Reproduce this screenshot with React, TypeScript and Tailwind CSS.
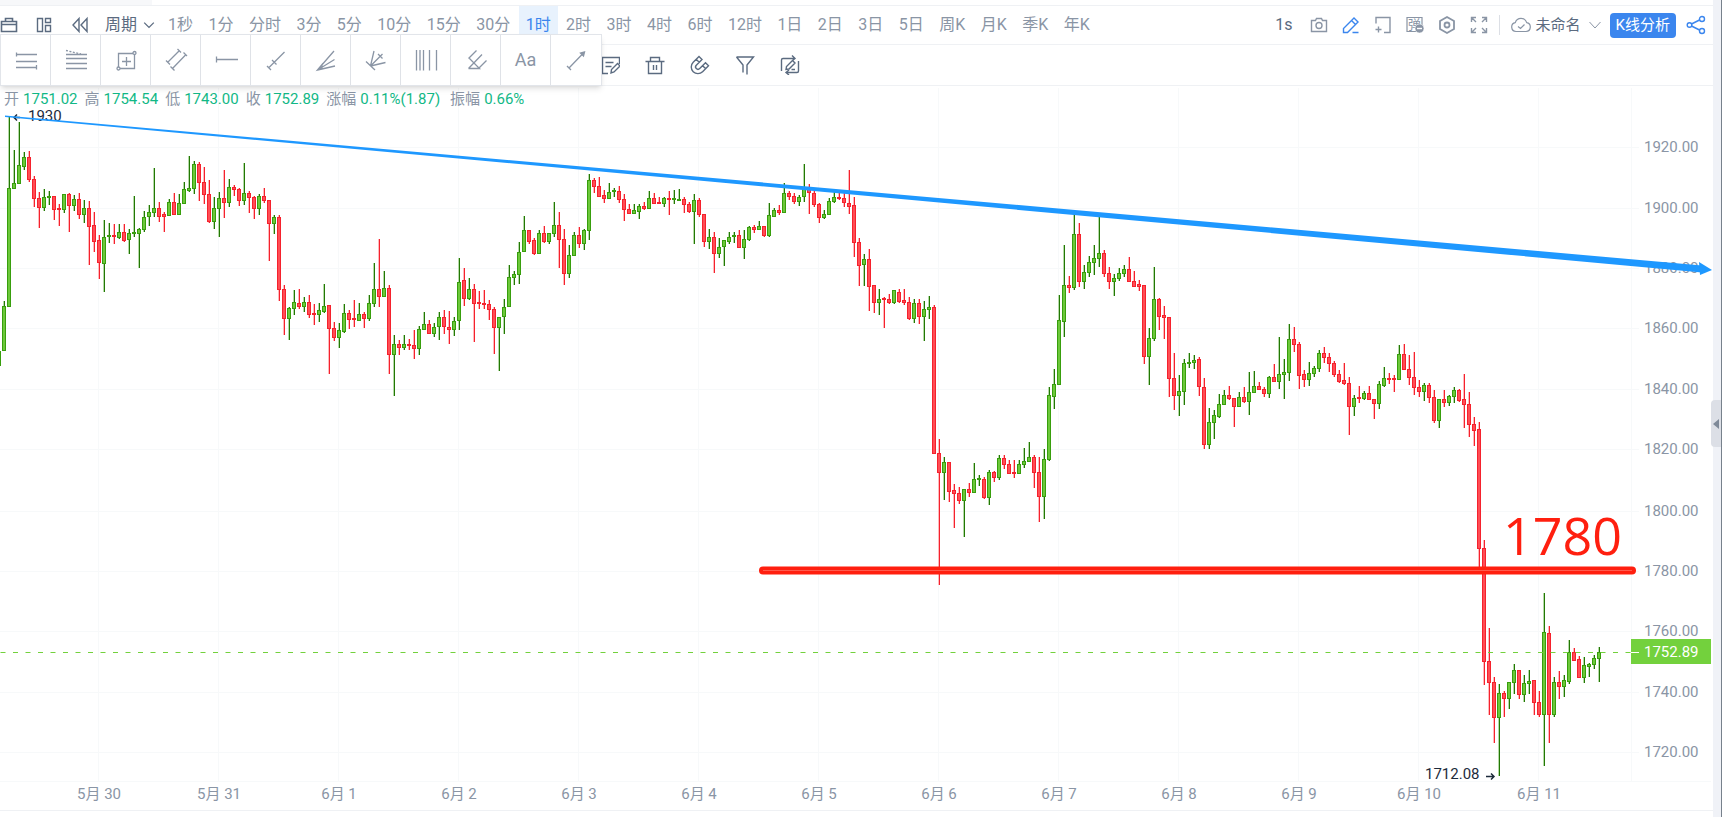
import React from 'react';

type Side = 'u' | 'd';

interface IconProps {
  children: React.ReactNode;
  size?: string;
}

const PERIODS = [
  '1秒', '1分', '分时', '3分', '5分', '10分', '15分', '30分', '1时', '2时', '3时', '4时',
  '6时', '12时', '1日', '2日', '3日', '5日', '周K', '月K', '季K', '年K',
];

const QUOTES = [
  { label: '开', value: '1751.02' },
  { label: '高', value: '1754.54' },
  { label: '低', value: '1743.00' },
  { label: '收', value: '1752.89' },
  { label: '涨幅', value: '0.11%(1.87)' },
  { label: '振幅', value: '0.66%' },
];

const PRICE_TICKS = [
  { price: '1920.00', y: 147 },
  { price: '1900.00', y: 208 },
  { price: '1880.00', y: 268 },
  { price: '1860.00', y: 328 },
  { price: '1840.00', y: 389 },
  { price: '1820.00', y: 449 },
  { price: '1800.00', y: 511 },
  { price: '1780.00', y: 571 },
  { price: '1760.00', y: 631 },
  { price: '1740.00', y: 692 },
  { price: '1720.00', y: 752 },
];

const DAYS = [
  '5月 30', '5月 31', '6月 1', '6月 2', '6月 3', '6月 4', '6月 5',
  '6月 6', '6月 7', '6月 8', '6月 9', '6月 10', '6月 11',
];

// one hourly bar per entry: side, high, body top, body bottom, low
const BARS = `
u 351 351 366 366|u 301 306 351 351|u 117 188 307 307|u 150 183 189 189|u 122 165 184 184|u 152 157 167 170
d 151 157 180 182|d 176 179 199 207|d 192 198 208 228|u 189 197 208 211|u 191 196 198 205|d 196 196 210 220
d 204 208 210 226|u 194 194 210 213|d 193 194 206 232|u 195 199 206 211|d 193 199 215 219|u 200 208 215 223
d 201 208 227 265|d 212 225 242 252|d 235 240 263 279|u 220 237 264 292|u 223 235 237 243|d 224 235 237 244
u 224 232 238 239|d 224 232 241 242|u 229 233 240 254|u 196 232 234 237|u 228 229 234 268|u 211 217 230 232
u 205 212 217 226|u 168 208 213 217|d 202 208 217 222|d 212 214 217 232|u 199 202 216 216|d 193 202 215 215
u 194 203 215 215|u 182 189 204 204|u 156 188 191 192|u 161 164 189 194|d 162 164 183 201|d 167 182 195 204
d 180 194 222 223|u 197 208 222 229|u 192 198 209 237|d 170 198 203 218|u 179 187 203 207|d 185 187 190 196
d 188 189 201 206|u 163 193 201 205|d 191 193 198 213|d 196 197 209 219|u 194 196 209 215|d 188 196 201 203
d 200 200 224 261|u 215 217 224 234|d 215 217 290 301|d 285 289 319 335|u 307 308 319 340|u 290 302 309 315
d 289 303 307 309|u 297 302 307 312|d 295 302 315 318|d 304 313 315 325|u 303 310 315 322|u 284 306 312 313
d 305 305 329 374|d 322 328 338 341|u 323 330 338 348|u 304 313 332 333|d 310 313 320 329|d 300 318 320 327
u 303 314 321 321|d 312 314 319 328|u 295 303 319 321|u 263 289 304 307|d 239 289 297 307|u 271 288 297 297
d 285 288 355 374|u 335 344 355 396|d 340 344 348 355|u 335 344 348 350|d 339 344 346 350|d 330 345 349 359
u 326 329 349 355|u 312 324 330 330|d 320 324 334 334|u 323 327 334 337|u 312 317 327 340|d 310 317 327 334
d 311 327 330 344|u 317 321 330 336|u 258 282 321 330|d 268 280 299 306|u 278 289 299 300|d 284 289 304 342
d 291 302 304 309|d 290 303 305 309|d 300 304 310 320|d 307 309 328 354|u 317 317 328 371|u 299 307 317 334
u 265 277 307 307|u 271 274 278 285|u 242 252 275 284|u 216 230 252 252|d 230 230 242 244|d 238 240 254 255
u 230 233 254 254|d 226 233 242 243|u 233 233 242 244|u 202 225 234 237|d 212 225 240 268|d 229 239 274 285
u 245 255 274 278|u 232 235 256 256|d 227 235 244 248|u 229 230 244 250|u 174 180 231 240|d 178 180 187 193
d 177 186 197 197|d 190 195 199 203|u 183 192 199 199|u 188 190 192 197|d 186 191 200 203|d 194 199 210 221
d 204 209 214 214|u 204 210 214 214|u 204 206 212 219|d 202 206 209 210|u 191 198 209 209|d 193 198 204 204
d 197 202 204 204|u 197 198 204 207|d 191 198 200 215|u 190 198 200 204|u 189 199 200 200|d 197 199 205 213
d 202 204 212 213|u 194 200 212 244|d 198 200 215 217|d 214 214 242 247|u 229 237 242 249|d 232 237 254 273
u 238 247 254 258|u 240 240 247 266|u 232 237 242 244|u 232 235 237 243|d 230 235 248 248|u 230 239 248 259
u 226 227 240 241|d 225 227 230 233|u 221 226 230 230|d 226 226 236 237|u 203 215 236 237|u 208 210 217 217
d 205 210 213 215|u 183 193 213 213|d 191 193 197 200|d 193 196 202 204|u 195 197 202 206|u 164 189 197 202
d 184 189 193 214|d 190 193 205 207|d 203 204 218 223|u 210 214 218 219|u 198 201 215 215|u 192 197 202 203
d 192 197 199 200|d 190 198 203 207|d 170 203 207 214|d 197 205 243 257|d 238 242 266 286|u 254 259 265 286
d 249 259 287 311|d 285 285 303 313|u 289 299 303 315|d 297 298 300 328|d 294 299 303 304|u 290 290 303 304
d 289 292 302 303|d 289 300 303 305|d 297 302 319 320|u 299 303 319 323|d 299 303 317 324|u 301 309 317 341
u 296 307 310 319|d 305 307 454 454|d 439 453 473 585|u 457 462 473 500|d 462 462 492 502|d 484 490 494 528
d 487 493 501 504|u 489 489 501 537|d 483 489 493 497|u 463 479 493 493|u 475 478 480 486|d 477 479 498 499
u 470 472 498 505|d 471 472 478 482|u 455 458 478 480|d 455 458 465 469|d 460 464 474 474|d 460 472 474 478
u 460 464 474 474|u 448 461 465 468|u 442 457 462 462|d 455 457 473 488|d 457 472 497 522|u 449 459 497 519
u 387 395 460 461|u 369 384 397 409|u 295 320 385 385|u 245 285 322 337|d 276 285 288 293|u 213 234 288 290
d 223 234 282 287|u 265 272 282 289|u 256 262 273 277|u 245 258 263 275|u 216 253 259 267|d 250 253 274 277
d 267 273 282 289|u 274 278 282 296|u 268 273 279 281|u 265 269 274 277|d 257 269 282 282|d 271 281 287 287
d 280 284 287 291|d 285 285 357 364|u 328 338 357 385|u 267 299 339 341|d 298 299 317 330|d 306 315 318 339
d 317 317 379 397|d 353 378 396 410|u 375 391 396 416|u 359 363 392 405|u 353 362 364 368|u 355 360 363 369
d 357 359 387 396|d 378 387 445 449|u 408 422 445 449|u 410 415 423 439|u 394 404 417 418|u 390 395 405 405
d 386 395 399 400|d 398 398 407 427|u 392 397 407 407|d 387 397 402 403|u 372 392 402 415|u 371 386 393 393
d 382 386 390 390|d 387 389 394 397|u 376 377 394 398|d 364 377 382 382|u 337 374 382 389|u 359 372 375 399
u 324 339 373 381|d 327 339 345 352|d 342 344 376 389|d 370 374 380 387|u 362 373 380 386|u 366 368 374 377
u 350 353 369 372|d 347 353 358 363|d 353 357 364 372|d 361 363 375 377|d 370 374 382 383|d 363 380 384 385
d 377 383 407 435|u 395 398 407 416|d 386 397 399 403|u 391 393 399 400|d 386 393 400 400|d 399 399 404 419
u 381 384 404 409|u 367 378 386 387|d 373 378 380 384|d 375 378 380 392|u 345 354 380 380|d 344 354 370 370
d 355 369 378 385|d 352 377 388 395|d 380 387 392 397|u 383 385 392 401|d 383 385 398 403|d 390 397 421 423
u 399 399 421 428|d 390 399 403 407|u 395 396 403 406|u 387 390 397 403|d 389 390 401 402|d 374 399 405 428
d 392 404 425 437|d 417 424 431 446|d 422 429 549 570|d 540 548 662 685|d 628 661 683 715|d 677 682 718 743
u 684 693 718 776|d 691 693 699 717|u 682 682 699 709|u 664 670 683 694|d 670 670 695 699|u 675 683 695 702
u 670 681 684 694|d 680 680 703 715|d 691 702 715 717|u 593 632 715 766|d 626 633 715 743|u 677 682 715 717
d 671 682 687 699|u 675 680 687 697|u 640 652 682 684|d 648 652 661 661|d 656 659 678 678|u 657 665 678 683
u 663 664 667 677|u 655 658 665 669|u 647 652 659 682
`
  .trim()
  .split(/[|\n]/)
  .map((row) => {
    const [side, ...rest] = row.split(' ');
    const [high, top, bottom, low] = rest.map(Number);
    return { side: side as Side, high, top, bottom, low };
  });

const BAR_COLORS = {
  u: { wick: '#237804', soft: '#b4d9a6', edge: '#389e0d', fill: '#6cc83a' },
  d: { wick: '#f5222d', soft: '#ffb8bb', edge: '#f5222d', fill: '#ff4d55' },
};

const Icon: React.FC<IconProps> = ({ children, size = 'size-5' }) => (
  <svg viewBox="0 0 20 20" className={`${size} shrink-0`} fill="none" stroke="currentColor" strokeWidth="1.4" aria-hidden="true">
    {children}
  </svg>
);

const DRAW_TOOLS: { name: string; art: React.ReactNode }[] = [
  { name: '平行线段', art: <path d="M2 6.5h21M2.5 4.5v4M2 13.5h21M2 19.5h21M22.5 17v4.5" /> },
  {
    name: '斐波那契',
    art: (
      <>
        <path d="M2 2.5 17 6" strokeDasharray="2 1.5" />
        <path d="M2 6.5h21M2 10.5h21M2 15.5h21M2 20.5h21" />
      </>
    ),
  },
  {
    name: '矩形',
    art: (
      <>
        <path d="M19 5.5H4.5V19M6 20.5h14.5V7M8 13.5h9M12.5 9v9" />
        <circle cx="20.5" cy="5" r="1.5" />
        <circle cx="4.5" cy="20.5" r="1.5" />
      </>
    ),
  },
  { name: '平行通道', art: <path d="m3.5 14.5 12-12M2 12.5l4 4M13.5 1l3.5 3.5M8 21 22 6.5M6.5 18.5l4 4M19.5 4.5 23 8" /> },
  { name: '水平射线', art: <path d="M2 11.5h22M2.5 8.5v6" /> },
  { name: '射线', art: <path d="m4.5 20 16-16M3 18l4 4M8 12l4.5 4.5" /> },
  { name: '扇形线', art: <path d="M3.5 22 20 3M3.5 22l17-10.500M3.5 22 21 18M3.5 22 8 16.5v4z" /> },
  { name: '角度线', art: <path d="M6.5 18 10 3M6.5 18l12-12M6.5 18l15-3.5M2 13.5l9 8.5M14 6l4.5 4.5" /> },
  { name: '竖线', art: <path d="M2.5 2v20.5M6 2v20.5M9.5 2v20.5M15.5 2v20.5M22.5 2v20.5" /> },
  { name: '音叉线', art: <path d="m4.5 10.500 8-8M4.5 20.5 18 6.5M14.5 20.5l8-8M5.5 10.5l10 10h-11" /> },
  { name: '文字', art: null },
  {
    name: '箭头',
    art: (
      <>
        <path d="M5 20 19 5.5M3 18l4 4" />
        <path d="m20.5 4-1 4-3-3z" fill="currentColor" />
      </>
    ),
  },
];

const Toolbar: React.FC = () => (
  <header className="flex h-[39px] items-stretch border-b border-[#eff1f4] text-base text-[#8a95a5]">
    <div className="flex items-center text-[#5b6b80]">
      <button aria-label="日历" className="-ml-px">
        <Icon>
          <path d="M2.5 6.5h15v10h-15zM2.5 9.5h15M6.5 6.5v-3h7v3" strokeWidth="1.6" />
        </Icon>
      </button>
      <button aria-label="布局" className="ml-[15px]">
        <Icon>
          <path d="M3.5 3.5h5v13h-5zM11.5 3.5h5v4h-5zM11.5 10.5h5v6h-5z" />
        </Icon>
      </button>
      <button aria-label="回放" className="ml-4">
        <Icon>
          <path d="M9 3.5v13L3 10zM17 3.5v13L11 10z" />
        </Icon>
      </button>
      <button className="ml-[15px] flex items-center gap-1">
        周期
        <Icon size="size-4">
          <path d="m4 7 6 6 6-6" strokeWidth="1.6" />
        </Icon>
      </button>
    </div>
    <nav className="ml-1 flex w-[936px] shrink-0 justify-between">
      {PERIODS.map((p) => (
        <button
          key={p}
          className={
            p === '1时'
              ? 'bg-[#e8f2fd] px-[7px] whitespace-nowrap text-[#3b86ee]'
              : 'px-[7px] whitespace-nowrap'
          }
        >
          {p}
        </button>
      ))}
    </nav>
    <div className="ml-auto flex items-center pr-[7px]">
      <span className="mr-4 text-[#5b6b80]">1s</span>
      <div className="flex items-center gap-3">
        <button aria-label="截图">
          <Icon>
            <path d="M2.5 5.5h4l1-2h5l1 2h4v11h-15z" />
            <circle cx="10" cy="10.5" r="3" />
          </Icon>
        </button>
        <button aria-label="画线" className="text-[#3b86ee]">
          <Icon>
            <path d="M2.5 17.5v-4L13 3l4 4L6.5 17.5zM10.5 5.5l4 4M11.5 17.5h6" />
          </Icon>
        </button>
        <button aria-label="添加窗口">
          <Icon>
            <path d="M3 8.500v-6h14v15h-6M5.5 11.5v6M2.5 14.5h6" />
          </Icon>
        </button>
        <button aria-label="弹窗">
          <Icon>
            <path d="M2 2.5h15v14H2z" strokeWidth="1.2" />
            <text x="3" y="14" fontSize="13" fill="currentColor" stroke="none">弹</text>
            <circle cx="14.5" cy="13.5" r="4.5" fill="currentColor" stroke="white" strokeWidth=".6" />
            <path d="M12 13.5h5" stroke="white" />
          </Icon>
        </button>
        <button aria-label="设置">
          <Icon>
            <path d="m10 2 7 4v8l-7 4-7-4V6z" strokeWidth="1.8" />
            <circle cx="10" cy="10" r="2.5" strokeWidth="1.8" />
          </Icon>
        </button>
        <button aria-label="全屏">
          <Icon>
            <path d="M2.5 7V2.5H7M2.5 2.5 7 7M13 2.5h4.5V7M17.5 2.5 13 7M2.5 13v4.5H7M2.5 17.5 7 13M13 17.5h4.5V13M17.5 17.5 13 13" />
          </Icon>
        </button>
      </div>
      <span className="mx-[10px] h-5 w-px bg-[#dcdfe5]" />
      <button className="flex items-center text-[15px] text-[#5b6b80]">
        <svg viewBox="0 0 22 20" className="mr-1 h-5 w-[22px] text-[#8a95a5]" fill="none" stroke="currentColor" strokeWidth="1.2" aria-hidden="true">
          <path d="M6 16.5a4.5 4.5 0 0 1-.7-8.900 6 6 0 0 1 11.400 0A4.5 4.5 0 0 1 16 16.5zM8 11.5l2.5 2 4-4" />
        </svg>
        未命名
        <svg viewBox="0 0 12 12" className="ml-2 size-3 text-[#8a95a5]" fill="none" stroke="currentColor" aria-hidden="true">
          <path d="m.5 3 5.500 6 5.500-6" />
        </svg>
      </button>
      <button className="mr-[10px] ml-[9px] h-[25px] rounded-sm bg-[#3b86ee] px-[6px] text-[15px] whitespace-nowrap text-white">
        K线分析
      </button>
      <button aria-label="分享" className="text-[#3b86ee]">
        <Icon>
          <circle cx="3.5" cy="10" r="2.3" />
          <circle cx="16" cy="4" r="2.5" />
          <circle cx="16" cy="16" r="2.5" />
          <path d="m5.500 9 8-4M5.500 11l8 4" />
        </Icon>
      </button>
    </div>
  </header>
);

const DrawPalette: React.FC = () => (
  <div className="absolute top-[34px] left-0 z-10 flex h-[52px] border border-[#e2e5ea] bg-white text-[#8a95a5] shadow-md">
    {DRAW_TOOLS.map((tool) => (
      <button
        key={tool.name}
        aria-label={tool.name}
        className="flex w-[50px] items-center justify-center border-r border-[#dfe2e7] last:border-r-0"
      >
        {tool.art ? (
          <svg viewBox="0 0 24 24" className="size-6" fill="none" stroke="currentColor" strokeWidth="1.3" aria-hidden="true">
            {tool.art}
          </svg>
        ) : (
          <span className="text-lg">Aa</span>
        )}
      </button>
    ))}
  </div>
);

const EditBar: React.FC = () => (
  <div className="flex h-[41px] items-center gap-[25px] border-b border-[#eff1f4] pl-[600px] text-[#5b6b80]">
    <button aria-label="画线列表">
      <Icon>
        <path d="M8 18.5H2.5v-16h17V9M5.5 7.5h8M5.5 11.5h6M11 18l.5-3.5 6-6L20 11l-6 6z" />
      </Icon>
    </button>
    <button aria-label="删除">
      <Icon>
        <path d="M.5 6.5h19M3.5 6.5v12h13v-12M5.5 6V2.5h9V6M8.5 10v5M11.5 10v5" />
      </Icon>
    </button>
    <button aria-label="磁吸">
      <Icon>
        <path d="M9 1.5 3.2 7.3a6.600 6.600 0 0 0 9.400 9.400l5.900-5.900-3-3-5.800 5.800a2.400 2.400 0 0 1-3.400-3.400L12 4.500zM6.2 4.300l3 3M12.700 10.700l3 3" />
      </Icon>
    </button>
    <button aria-label="筛选">
      <Icon>
        <path d="M1.5 2h17L12 10v9.5M1.5 2 8 10v7.5" />
      </Icon>
    </button>
    <button aria-label="连续画线">
      <Icon>
        <path d="M1.5 16V5a1.500 1.500 0 0 1 1.500-1.500h12M12 .5l3 3-3 2.5M18.5 6v10a1.500 1.500 0 0 1-1.500 1.500H6M9 15l-3 2.500L9 20M6 14.5l.5-3 6-6L15 8l-6 6zM11.500 14.5H15" />
      </Icon>
    </button>
  </div>
);

const Chart: React.FC = () => (
  <svg viewBox="0 86 1713 731" className="block h-auto w-full" fontSize="15" role="img" aria-label="K线">
    {/* Grid */}
    <g stroke="#f7f9fa" strokeWidth="1" shapeRendering="crispEdges">
      {DAYS.map((d, i) => (
        <line key={d} x1={98.5 + i * 120} x2={98.5 + i * 120} y1={88} y2={781} />
      ))}
      {PRICE_TICKS.map((t) => (
        <line key={t.price} x1={0} x2={1639} y1={t.y + 0.5} y2={t.y + 0.5} />
      ))}
      <line x1={1631.5} x2={1631.5} y1={88} y2={781} />
      <line x1={0} x2={1711} y1={781.5} y2={781.5} />
      <line x1={0} x2={1713} y1={810.5} y2={810.5} stroke="#eff1f4" />
    </g>

    {/* Axis labels */}
    <g fill="#8a95a5">
      {PRICE_TICKS.map((t) => (
        <text key={t.price} x={1644} y={t.y + 5}>{t.price}</text>
      ))}
      {DAYS.map((d, i) => (
        <text key={d} x={99 + i * 120} y={799} textAnchor="middle">{d}</text>
      ))}
    </g>

    {/* Candles */}
    <g shapeRendering="crispEdges">
      {BARS.map((b, i) => {
        const c = BAR_COLORS[b.side];
        const x = i * 5 - 3;
        const h = Math.max(b.bottom - b.top, 2);
        return (
          <g key={i}>
            <rect x={x + 1} y={b.high} width={1} height={b.low - b.high} fill={c.soft} />
            <rect x={x + 2} y={b.high} width={1} height={b.low - b.high} fill={c.wick} />
            <rect x={x} y={b.top} width={4} height={h} fill={c.edge} />
            {h > 2 && <rect x={x + 1} y={b.top + 1} width={2} height={h - 2} fill={c.fill} />}
          </g>
        );
      })}
    </g>

    {/* Last price */}
    <line x1={0.5} x2={1631} y1={652.5} y2={652.5} stroke="#73d13d" strokeDasharray="5 7.5" />
    <rect x={1631} y={639} width={80} height={25} fill="#73d13d" />
    <path d="M1631 652.5h8" stroke="white" />
    <text x={1644} y={657} fill="white">1752.89</text>

    {/* High and low markers */}
    <g fill="#1d2b3c">
      <text x={28} y={121}>1930</text>
      <text x={1425} y={779}>1712.08</text>
    </g>
    <path d="M20 117.500h-6m3-3-3 3 3 3M1486 776.500h8m-3-3 3 3-3 3" fill="none" stroke="#1d2b3c" strokeWidth="1.5" />

    {/* Trend line */}
    <path d="M5 115.500 1702 265.500v7L5 117z" fill="#1e98ff" />
    <path d="M1699 262 1712 270 1700 275z" fill="#1e98ff" />

    {/* Support */}
    <line x1={763} x2={1632} y1={570.5} y2={570.5} stroke="#ff1f0f" strokeWidth={8} strokeLinecap="round" />
    <line x1={763} x2={1632} y1={570.5} y2={570.5} stroke="#ff5a4d" strokeWidth={1} />
    <text x={1503} y={555} fontSize="52" fill="#ff1f0f" className="font-['Open_Sans',sans-serif]">1780</text>
  </svg>
);

const App: React.FC = () => (
  <div className="flex min-h-screen bg-white font-[Roboto,'Noto_Sans_CJK_SC',sans-serif]">
    <main className="relative min-w-0 flex-1">
      <div className="h-[6px] border-b border-[#eff1f4]">
        <div className="h-[5px] w-[152px] bg-[#f7f8fa]" />
      </div>
      <Toolbar />
      <EditBar />
      <DrawPalette />
      <section className="relative">
        <dl className="absolute top-[2px] left-1 flex gap-[7px] text-[15px] leading-[22px] whitespace-nowrap">
          {QUOTES.map((q) => (
            <div key={q.label} className="flex gap-1 last:ml-[3px]">
              <dt className="text-[#8a95a5]">{q.label}</dt>
              <dd className="text-[#12b886]">{q.value}</dd>
            </div>
          ))}
        </dl>
        <Chart />
      </section>
    </main>
    <aside className="relative w-[9px] shrink-0 border-r border-[#77818c] bg-[#f0f2f7]">
      <button
        aria-label="展开侧栏"
        className="absolute top-[400px] -left-[2px] flex h-[47px] w-[10px] items-center justify-center rounded-l-sm bg-[#dcdfe6]"
      >
        <svg viewBox="0 0 6 10" className="h-[10px] w-[6px]" aria-hidden="true">
          <path d="M6 0v10L0 5z" fill="#7f8a99" />
        </svg>
      </button>
    </aside>
  </div>
);

export default App;
